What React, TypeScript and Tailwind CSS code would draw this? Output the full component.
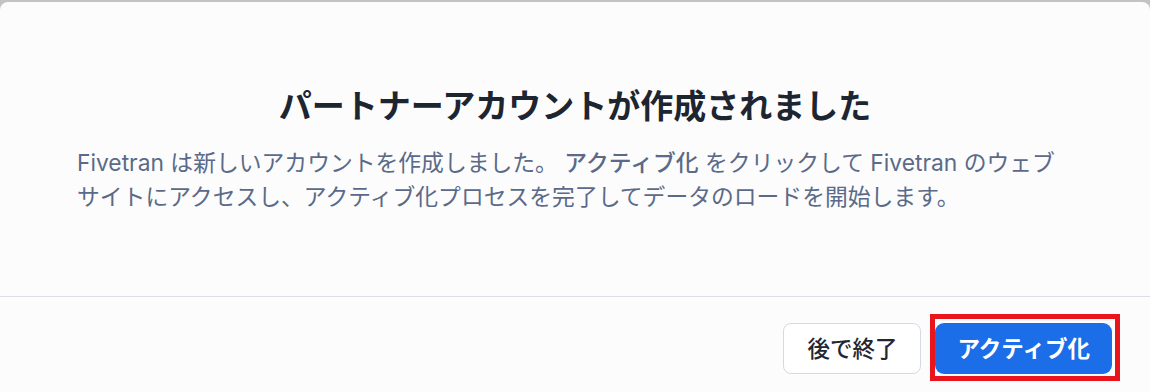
export default function App() {
  return (
    <div
      className="h-screen overflow-hidden bg-[#c3c3c3] pt-[2px]"
      style={{ fontFamily: 'Inter, "Noto Sans CJK JP", sans-serif' }}
    >
      {/* Dialog */}
      <div className="flex h-[420px] flex-col rounded-t-[8px] bg-[#fcfcfd]">
        {/* Body */}
        <div className="flex h-[294px] flex-col justify-center px-[77px]">
          <h1 className="mb-[18px] text-center text-[33px] font-bold leading-[44px] text-[#1d2531]">
            パートナーアカウントが作成されました
          </h1>
          <p className="pr-[13px] text-[22.8px] leading-[34px] text-[#5a6a88]">
            Fivetran は新しいアカウントを作成しました。 <span className="font-medium">アクティブ化</span>{' '}
            をクリックして Fivetran のウェブサイトにアクセスし、アクティブ化プロセスを完了してデータのロードを開始します。
          </p>
        </div>

        {/* Footer */}
        <div className="flex justify-end gap-[14px] border-t border-[#dcdfeb] pr-[38px] pt-[26px]">
          <button className="h-[51px] rounded-[8px] border border-[#d5d9e3] bg-white px-[23px] text-[22.5px] font-medium text-[#1f2733]">
            後で終了
          </button>
          <div className="relative">
            <button className="h-[51px] rounded-[9px] bg-[#1b6ee7] px-[22px] text-[22.5px] font-semibold text-white">
              アクティブ化
            </button>
            <span className="pointer-events-none absolute bottom-[-7px] left-[-5px] right-[-8px] top-[-9px] border-[5px] border-[#e9151d]" />
          </div>
        </div>
      </div>
    </div>
  )
}
